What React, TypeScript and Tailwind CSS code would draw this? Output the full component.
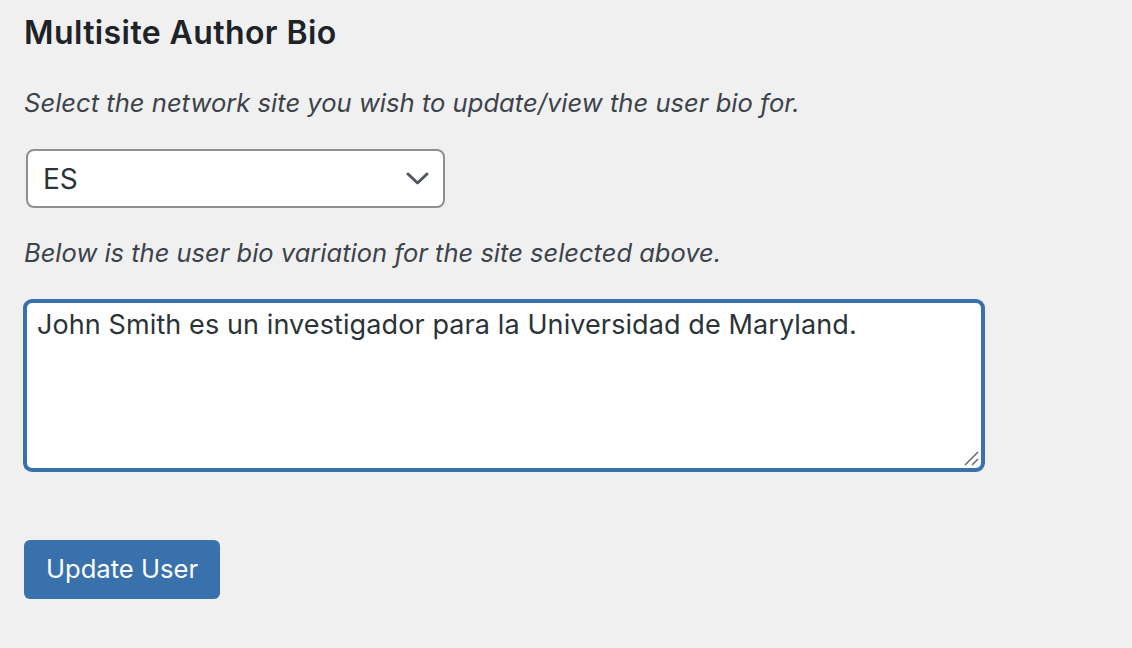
export default function App() {
  const font = { fontFamily: "Inter, 'Noto Sans', sans-serif" }

  return (
    <div className="min-h-screen w-full bg-[#f0f0f1] px-[24px] pt-[14px]" style={font}>
      {/* Section heading */}
      <h2 className="text-[32px] leading-[37px] font-semibold tracking-[0.4px] text-[#1d2327]">Multisite Author Bio</h2>

      <p className="mt-[36px] text-[25.6px] leading-[32px] italic text-[#3c434a]">
        Select the network site you wish to update/view the user bio for.
      </p>

      {/* Site picker */}
      <div className="mt-[30px] ml-[2px] w-[419px] h-[59px] flex items-center justify-between border-2 border-[#8c8f94] rounded-[8px] bg-white pl-[15px] pr-[14px]">
        <span className="text-[28px] text-[#2c3338]">ES</span>
        <svg width="23" height="14" viewBox="0 0 23 14" fill="none" className="text-[#50575e]">
          <polyline points="2,2 11.5,11 21,2" stroke="currentColor" strokeWidth="3" strokeLinecap="round" strokeLinejoin="round" />
        </svg>
      </div>

      <p className="mt-[29px] text-[25.5px] leading-[32px] italic text-[#3c434a]">
        Below is the user bio variation for the site selected above.
      </p>

      {/* Bio text */}
      <div className="relative mt-[30px] -ml-[1px] w-[962px]">
        <textarea
          className="block w-full h-[173px] border-4 border-[#3871ac] rounded-[9px] bg-white px-[10px] pt-[2px] text-[27px] leading-[39px] tracking-[0.1px] text-[#2c3338] outline-none resize-none"
          defaultValue="John Smith es un investigador para la Universidad de Maryland."
        />
        <svg width="16" height="16" viewBox="0 0 16 16" className="absolute right-[6px] bottom-[6px] text-[#5f6368]">
          <line x1="2" y1="15" x2="15" y2="2" stroke="currentColor" strokeWidth="1.5" />
          <line x1="9" y1="15" x2="15" y2="9" stroke="currentColor" strokeWidth="1.5" />
        </svg>
      </div>

      <button className="mt-[68px] w-[196px] h-[59px] rounded-[6px] bg-[#3871ac] text-white text-[25.6px]">
        Update User
      </button>
    </div>
  )
}
